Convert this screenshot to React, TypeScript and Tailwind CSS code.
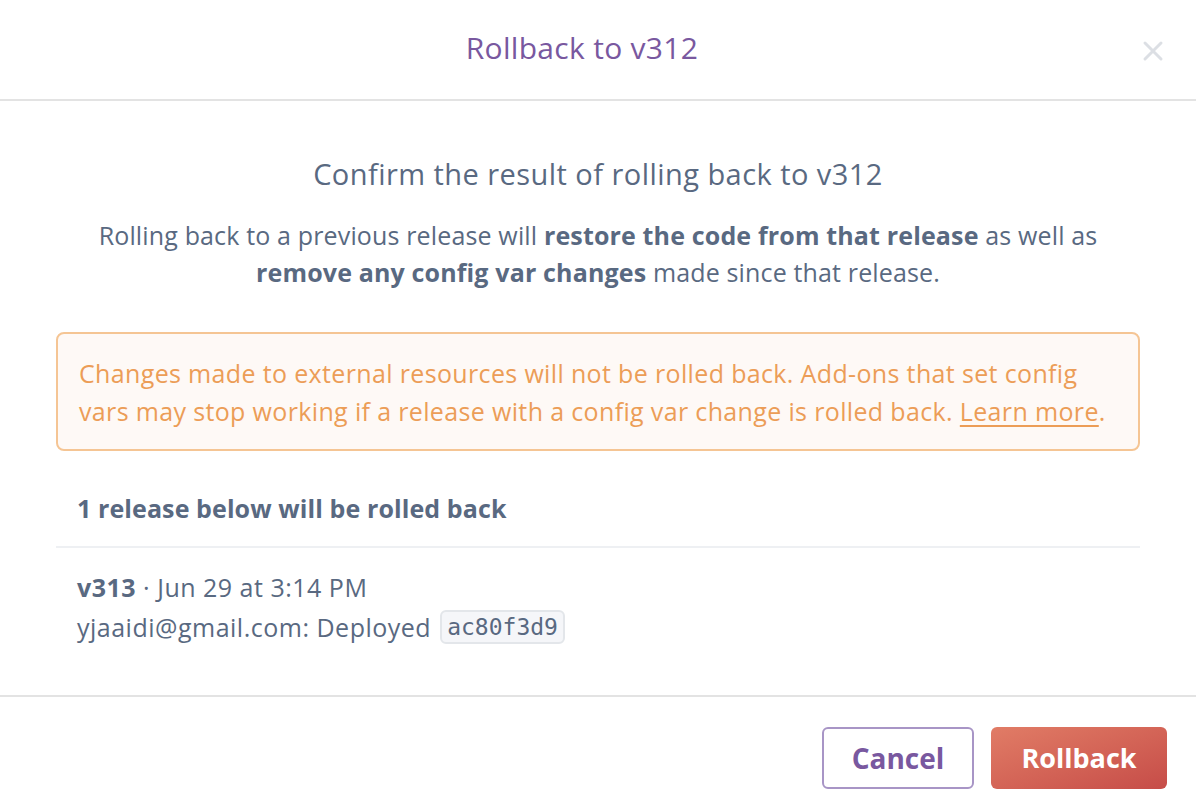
import React from "react";

export default function App() {
  return (
    <div className="w-[1196px] h-[812px] bg-white flex flex-col overflow-hidden text-[#596981] font-['Open_Sans','Noto_Sans',sans-serif]">
      {/* header */}
      <header className="h-[101px] shrink-0 border-b-2 border-[#e3e3e3] flex items-center justify-center relative">
        <h1 className="text-[30px] tracking-[0.3px] text-[#79589f] -mt-1 -ml-[32px]">Rollback to v312</h1>
        <button className="absolute right-[32px] top-[40px] w-[22px] h-[22px] text-[#dcdfe4]">
          <svg viewBox="0 0 22 22" width="22" height="22" fill="none" stroke="currentColor" strokeWidth="3" strokeLinecap="round">
            <path d="M3 3 L19 19 M19 3 L3 19" />
          </svg>
        </button>
      </header>

      {/* body */}
      <main className="flex-1 flex flex-col px-[56px]">
        <h2 className="text-center text-[29px] tracking-[0.45px] mt-[55px] leading-[36px]">Confirm the result of rolling back to v312</h2>
        <p className="text-center text-[25px] tracking-[0.15px] leading-[37px] mt-[25px]">
          Rolling back to a previous release will <b className="font-bold">restore the code from that release</b> as well as
          <br />
          <b className="font-bold">remove any config var changes</b> made since that release.
        </p>

        <div className="mt-[41px] h-[119px] border-2 border-[#f5c594] bg-[#fef9f6] rounded-[8px] px-[21px] flex items-center">
          <p className="text-[25px] tracking-[0.35px] leading-[38px] text-[#ec9d57]">
            Changes made to external resources will not be rolled back. Add-ons that set config
            <br />
            vars may stop working if a release with a config var change is rolled back.{" "}
            <a href="#" className="underline underline-offset-[4px] decoration-[2px]">Learn more</a>.
          </p>
        </div>

        <div className="h-[97px] border-b-2 border-[#eef0f3] flex items-center px-[21px] pt-[20px]">
          <span className="text-[25px] font-bold tracking-[0.1px]">1 release below will be rolled back</span>
        </div>

        <div className="px-[21px] pt-[19px] text-[25px] tracking-[0.5px] leading-[40px]">
          <div>
            <b className="font-bold">v313</b> · Jun 29 at 3:14 PM
          </div>
          <div className="flex items-center">
            <span>yjaaidi@gmail.com: Deployed</span>
            <code className="ml-[9px] h-[34px] px-[5px] flex items-center border-2 border-[#e3e6ea] bg-[#f5f6f9] rounded-[6px] text-[23px] tracking-normal font-['DejaVu_Sans_Mono',monospace]">
              ac80f3d9
            </code>
          </div>
        </div>
      </main>

      {/* footer */}
      <footer className="h-[117px] shrink-0 border-t-2 border-[#e3e3e3] flex items-start justify-end gap-[17px] pr-[29px] pt-[30px]">
        <button className="w-[152px] h-[62px] rounded-[6px] border-2 border-[#a895c6] text-[#79589f] text-[28px] font-bold bg-white">
          Cancel
        </button>
        <button className="w-[176px] h-[62px] rounded-[6px] text-white text-[27px] font-bold bg-gradient-to-br from-[#e17c66] to-[#c64c48]">
          Rollback
        </button>
      </footer>
    </div>
  );
}
